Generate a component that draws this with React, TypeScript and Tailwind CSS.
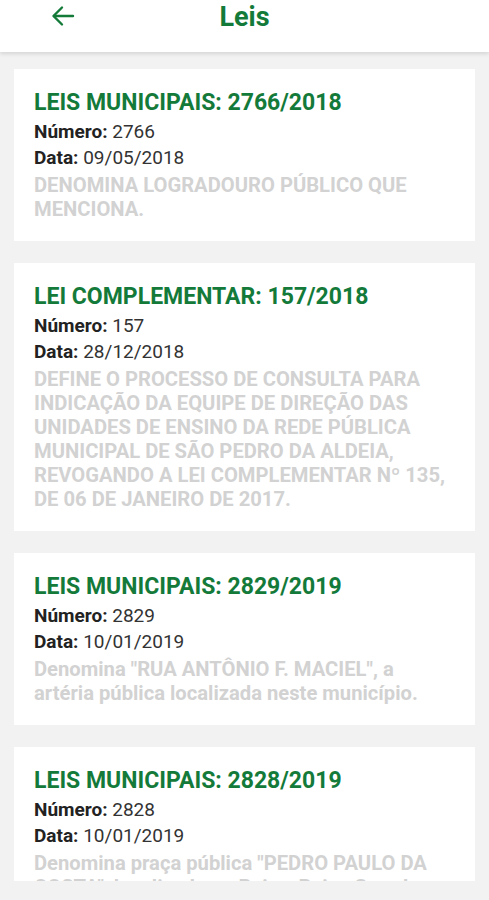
import React from "react";

type Lei = { titulo: string; numero: string; data: string; desc: string };

const leis: Lei[] = [
  {
    titulo: "LEIS MUNICIPAIS: 2766/2018",
    numero: "2766",
    data: "09/05/2018",
    desc: "DENOMINA LOGRADOURO PÚBLICO QUE MENCIONA.",
  },
  {
    titulo: "LEI COMPLEMENTAR: 157/2018",
    numero: "157",
    data: "28/12/2018",
    desc: "DEFINE O PROCESSO DE CONSULTA PARA INDICAÇÃO DA EQUIPE DE DIREÇÃO DAS UNIDADES DE ENSINO DA REDE PÚBLICA MUNICIPAL DE SÃO PEDRO DA ALDEIA, REVOGANDO A LEI COMPLEMENTAR Nº 135, DE 06 DE JANEIRO DE 2017.",
  },
  {
    titulo: "LEIS MUNICIPAIS: 2829/2019",
    numero: "2829",
    data: "10/01/2019",
    desc: 'Denomina "RUA ANTÔNIO F. MACIEL", a artéria pública localizada neste município.',
  },
  {
    titulo: "LEIS MUNICIPAIS: 2828/2019",
    numero: "2828",
    data: "10/01/2019",
    desc: 'Denomina praça pública "PEDRO PAULO DA COSTA", localizada no Bairro Baixo Grande, neste município.',
  },
];

function Card({ lei }: { lei: Lei }) {
  return (
    <div className="bg-white pt-[20px] pb-[20px] pl-[20px] pr-[22px] shrink-0">
      <div className="text-[23px] leading-[28px] font-bold text-[#137a3a] whitespace-nowrap">{lei.titulo}</div>
      <div className="mt-[2px] text-[19px] leading-[26px] text-[#333]">
        <span className="font-bold text-[#222]">Número:</span> {lei.numero}
      </div>
      <div className="text-[19px] leading-[26px] text-[#333]">
        <span className="font-bold text-[#222]">Data:</span> {lei.data}
      </div>
      <div className="mt-[2px] text-[20.2px] leading-[24px] font-bold text-[#d2d2d2]">{lei.desc}</div>
    </div>
  );
}

export default function App() {
  return (
    <div
      className="w-[489px] h-[900px] bg-[#f2f2f2] overflow-hidden flex flex-col"
      style={{ fontFamily: "Roboto, 'Liberation Sans', sans-serif" }}
    >
      <div className="relative z-10 h-[52px] shrink-0 bg-white shadow-[0_2px_4px_rgba(0,0,0,0.12)]">
        <div className="relative h-[34px] flex items-center justify-center">
          <svg
            className="absolute left-[51px] top-[5px]"
            width="24"
            height="22"
            viewBox="0 0 24 22"
            fill="none"
            stroke="#137a3a"
            strokeWidth="2.4"
            strokeLinecap="round"
            strokeLinejoin="round"
          >
            <path d="M22 11H3" />
            <path d="M11 2.5L2.5 11L11 19.5" />
          </svg>
          <div className="text-[27px] leading-[34px] font-bold text-[#137a3a]">Leis</div>
        </div>
      </div>
      <div className="h-[829px] shrink-0 overflow-hidden px-[14px] pt-[17px] flex flex-col gap-[22px]">
        {leis.map((l, i) => (
          <Card key={i} lei={l} />
        ))}
      </div>
    </div>
  );
}
